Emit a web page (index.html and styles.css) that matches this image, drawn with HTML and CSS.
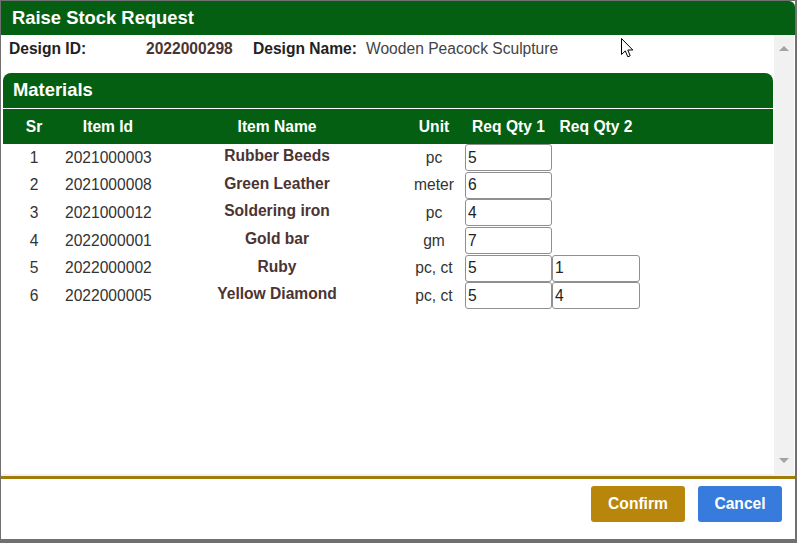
FILE: index.html
```html
<!DOCTYPE html>
<html>
<head>
<meta charset="utf-8">
<title>Raise Stock Request</title>
<link rel="stylesheet" href="styles.css">
</head>
<body>
<div class="modal">
  <div class="modal-header"><h3 class="modal-title">Raise Stock Request</h3></div>
  <div class="modal-body">
    <div class="scroll-content">
      <div class="design-row">
        <span class="label">Design ID:</span>
        <span class="design-id">2022000298</span>
        <span class="label">Design Name:</span>
        <span class="design-name">Wooden Peacock Sculpture</span>
      </div>
      <div class="materials">
        <h3 class="materials-title">Materials</h3>
        <div class="grid head">
          <span>Sr</span><span>Item Id</span><span>Item Name</span><span>Unit</span><span>Req Qty 1</span><span>Req Qty 2</span><span></span>
        </div>
        <div class="grid row">
          <span>1</span><span>2021000003</span><span class="name">Rubber Beeds</span><span>pc</span><input class="qty" value="5"><span></span><span></span>
        </div>
        <div class="grid row">
          <span>2</span><span>2021000008</span><span class="name">Green Leather</span><span>meter</span><input class="qty" value="6"><span></span><span></span>
        </div>
        <div class="grid row">
          <span>3</span><span>2021000012</span><span class="name">Soldering iron</span><span>pc</span><input class="qty" value="4"><span></span><span></span>
        </div>
        <div class="grid row">
          <span>4</span><span>2022000001</span><span class="name">Gold bar</span><span>gm</span><input class="qty" value="7"><span></span><span></span>
        </div>
        <div class="grid row">
          <span>5</span><span>2022000002</span><span class="name">Ruby</span><span>pc, ct</span><input class="qty" value="5"><input class="qty" value="1"><span></span>
        </div>
        <div class="grid row">
          <span>6</span><span>2022000005</span><span class="name">Yellow Diamond</span><span>pc, ct</span><input class="qty" value="5"><input class="qty" value="4"><span></span>
        </div>
      </div>
    </div>
    <div class="scrollbar"><span class="arrow up"></span><span class="arrow down"></span></div>
  </div>
  <div class="body-end"></div>
  <div class="modal-footer">
    <button class="btn confirm">Confirm</button>
    <button class="btn cancel">Cancel</button>
  </div>
</div>
<svg class="cursor" width="13" height="21" viewBox="0 0 13 21"><path d="M0.5 0.5 L0.5 16.5 L4.3 12.9 L6.8 18.8 L9.2 17.8 L6.8 12 L11.8 12 Z" fill="#fff" stroke="#000" stroke-width="1" stroke-linejoin="miter"/></svg>
</body>
</html>
```
FILE: styles.css
```css
html, body {
  margin: 0;
  padding: 0;
}
body {
  background: #707070;
  height: 543px;
  overflow: hidden;
  font-family: "Liberation Sans", Arial, sans-serif;
  font-size: 15.6px;
  color: #333;
  position: relative;
}
.modal {
  margin: 1px 0 0 1px;
  width: 794px;
  height: 538px;
  background: #fff;
  display: flex;
  flex-direction: column;
}
.modal-header {
  height: 34px;
  background: #055f12;
  border-radius: 0 6px 0 0;
  display: flex;
  align-items: center;
  padding-left: 11px;
}
.modal-title {
  margin: 0;
  color: #fff;
  font-size: 18.4px;
  font-weight: bold;
}
.modal-body {
  height: 439px;
  display: flex;
}
.scroll-content {
  flex: 1;
  overflow: hidden;
}
.scrollbar {
  width: 20px;
  background: #f1f1f1;
  display: flex;
  flex-direction: column;
  justify-content: space-between;
  align-items: center;
  padding: 11px 0 11px 0;
  box-sizing: border-box;
  margin-right: 1px;
}
.arrow {
  width: 0;
  height: 0;
  border-left: 5px solid transparent;
  border-right: 5px solid transparent;
}
.arrow.up { border-bottom: 5px solid #a3a3a3; }
.arrow.down { border-top: 5px solid #a3a3a3; }
.design-row {
  display: grid;
  grid-template-columns: 137px 107px 113px auto;
  padding: 5px 8px 0 8px;
  line-height: 18px;
}
.label {
  font-weight: bold;
  color: #222;
}
.design-id {
  font-weight: bold;
  color: #4b3432;
}
.design-name {
  color: #444;
}
.materials {
  margin: 15px 1px 0 2px;
}
.materials-title {
  margin: 0;
  height: 36px;
  display: flex;
  align-items: center;
  padding: 0 0 1px 10px;
  box-sizing: border-box;
  background: #055f12;
  color: #fff;
  font-size: 18.4px;
  font-weight: bold;
  border-radius: 8px 8px 0 0;
  border-bottom: 1px solid #fff;
}
.grid {
  display: grid;
  grid-template-columns: 62px 86px 252px 62px 87px 88px 1fr;
  align-items: center;
  text-align: center;
}
.grid.head {
  height: 35px;
  background: #055f12;
  color: #fff;
  font-weight: bold;
}
.grid.row {
  height: 27.6px;
}
.name {
  font-weight: bold;
  color: #4b3432;
  padding-bottom: 3px;
}
.qty {
  height: 27px;
  width: 100%;
  box-sizing: border-box;
  border: 1px solid #8f8f8f;
  border-radius: 3px;
  font-family: "Liberation Sans", Arial, sans-serif;
  font-size: 15.6px;
  color: #222;
  padding: 0 2px;
  margin: 0;
  text-align: left;
  background: #fff;
}
.body-end {
  height: 2px;
  background: #f1f1f1;
}
.modal-footer {
  flex: 1;
  border-top: 3px solid #a07c0c;
  display: flex;
  justify-content: flex-end;
  align-items: flex-start;
  gap: 13px;
  padding: 7px 13px 0 0;
}
.btn {
  height: 36px;
  border: none;
  border-radius: 3px;
  color: #fff;
  font-family: "Liberation Sans", Arial, sans-serif;
  font-weight: bold;
  font-size: 15.6px;
  padding: 0;
}
.btn.confirm {
  width: 94px;
  background: #b8860b;
}
.btn.cancel {
  width: 84px;
  background: #377bdc;
}
.cursor {
  position: absolute;
  left: 621px;
  top: 38px;
}
```
